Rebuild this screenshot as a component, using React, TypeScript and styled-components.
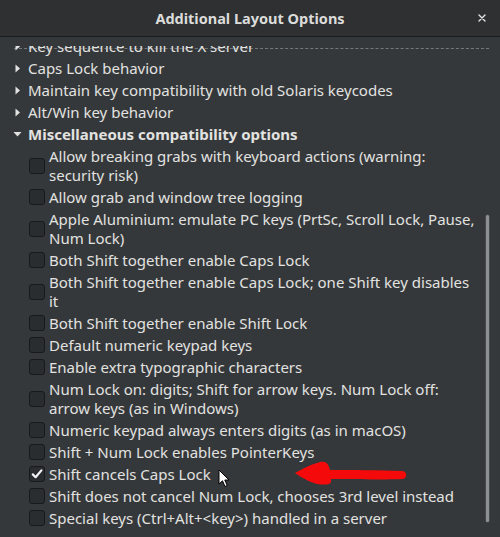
import React, { useLayoutEffect, useRef } from "react";
import styled, { createGlobalStyle } from "styled-components";

const Global = createGlobalStyle`
  html, body { margin: 0; padding: 0; background: #2b2d2f; }
  body { font-family: "Noto Sans", "DejaVu Sans", sans-serif; }
  * { box-sizing: border-box; }
`;

const Window = styled.div`
  position: relative;
  width: 500px;
  height: 537px;
  background: #35383a;
  color: #e2e2e0;
  display: flex;
  flex-direction: column;
  overflow: hidden;
`;

const TitleBar = styled.div`
  height: 37px;
  flex: none;
  background: #2e3032;
  border-bottom: 1px solid #1a1b1c;
  display: grid;
  grid-template-columns: 1fr auto 1fr;
  align-items: center;
`;

const Title = styled.div`
  grid-column: 2;
  font-weight: 700;
  font-size: 14.5px;
  color: #dcdcda;
`;

const CloseButton = styled.div`
  grid-column: 3;
  justify-self: end;
  margin-right: 14px;
  width: 8px;
  height: 8px;
  display: flex;
`;

const Body = styled.div`
  flex: 1;
  padding: 9px 0 8px;
  display: flex;
  min-height: 0;
`;

const Scroller = styled.div`
  position: relative;
  flex: 1;
  min-height: 0;
  display: flex;
`;

const Viewport = styled.div`
  flex: 1;
  overflow: hidden;
`;

const Undershoot = styled.div`
  position: absolute;
  left: 14px;
  right: 11px;
  top: 2px;
  border-top: 1px dashed rgba(200, 200, 200, 0.45);
  pointer-events: none;
`;

const Thumb = styled.div`
  position: absolute;
  right: 11px;
  top: 169px;
  bottom: 7px;
  width: 3px;
  border-radius: 2px;
  background: #8d8f90;
  box-shadow: 0 0 0 0.5px #5c5e60;
`;

const List = styled.div`
  display: flex;
  flex-direction: column;
`;

const Row = styled.div<{ $indent: number }>`
  display: flex;
  align-items: center;
  padding: 1.5px 0 1.5px ${(p) => p.$indent}px;
  font-size: 15px;
  line-height: 19px;
`;

const Expander = styled.span<{ $w?: number }>`
  width: ${(p) => p.$w ?? 13}px;
  flex: none;
  display: flex;
  align-items: center;
  justify-content: flex-start;
`;

const GroupLabel = styled.span<{ $bold?: boolean }>`
  font-weight: ${(p) => (p.$bold ? 700 : 400)};
  white-space: nowrap;
`;

const Box = styled.span`
  width: 16px;
  height: 16px;
  flex: none;
  margin-right: 4px;
  border-radius: 3px;
  border: 1px solid #17191a;
  background: #2a2d2f;
  display: flex;
  align-items: center;
  justify-content: center;
`;

const Label = styled.span`
  display: flex;
  flex-direction: column;
  white-space: nowrap;
`;

const Overlay = styled.svg`
  position: absolute;
  pointer-events: none;
`;

const groupsAbove = [
  "Key sequence to kill the X server",
  "Caps Lock behavior",
  "Maintain key compatibility with old Solaris keycodes",
  "Alt/Win key behavior",
];

const options: { lines: string[]; checked?: boolean }[] = [
  { lines: ["Allow breaking grabs with keyboard actions (warning:", "security risk)"] },
  { lines: ["Allow grab and window tree logging"] },
  { lines: ["Apple Aluminium: emulate PC keys (PrtSc, Scroll Lock, Pause,", "Num Lock)"] },
  { lines: ["Both Shift together enable Caps Lock"] },
  { lines: ["Both Shift together enable Caps Lock; one Shift key disables", "it"] },
  { lines: ["Both Shift together enable Shift Lock"] },
  { lines: ["Default numeric keypad keys"] },
  { lines: ["Enable extra typographic characters"] },
  { lines: ["Num Lock on: digits; Shift for arrow keys. Num Lock off:", "arrow keys (as in Windows)"] },
  { lines: ["Numeric keypad always enters digits (as in macOS)"] },
  { lines: ["Shift + Num Lock enables PointerKeys"] },
  { lines: ["Shift cancels Caps Lock"], checked: true },
  { lines: ["Shift does not cancel Num Lock, chooses 3rd level instead"] },
  { lines: ["Special keys (Ctrl+Alt+<key>) handled in a server"] },
];

const RightArrow = () => (
  <svg width="6" height="9" viewBox="0 0 6 9">
    <path d="M0.5 0.5 L5 4.5 L0.5 8.5 Z" fill="#e2e2e0" />
  </svg>
);

const DownArrow = () => (
  <svg width="9" height="6" viewBox="0 0 9 6">
    <path d="M0.5 1 L8.5 1 L4.5 5.5 Z" fill="#e2e2e0" />
  </svg>
);

const Check = () => (
  <svg width="12" height="12" viewBox="0 0 12 12">
    <path d="M1.8 6.4 L4.6 9.2 L10.4 2.4" fill="none" stroke="#f4f4f4" strokeWidth="2.2" strokeLinecap="round" strokeLinejoin="round" />
  </svg>
);

export default function App() {
  const vp = useRef<HTMLDivElement>(null);
  useLayoutEffect(() => {
    const el = vp.current;
    if (el) el.scrollTop = el.scrollHeight - el.clientHeight;
  }, []);

  return (
    <Window>
      <Global />
      <TitleBar>
        <Title>Additional Layout Options</Title>
        <CloseButton>
          <svg width="8" height="8" viewBox="0 0 8 8">
            <path d="M1 1 L7 7 M7 1 L1 7" stroke="#e6e6e6" strokeWidth="1.4" strokeLinecap="round" />
          </svg>
        </CloseButton>
      </TitleBar>
      <Body>
        <Scroller>
          <Viewport ref={vp}>
            <List>
              {groupsAbove.map((g) => (
                <Row key={g} $indent={15}>
                  <Expander>
                    <RightArrow />
                  </Expander>
                  <GroupLabel>{g}</GroupLabel>
                </Row>
              ))}
              <Row $indent={13}>
                <Expander $w={15}>
                  <DownArrow />
                </Expander>
                <GroupLabel $bold>Miscellaneous compatibility options</GroupLabel>
              </Row>
              {options.map((o) => (
                <Row key={o.lines[0]} $indent={29}>
                  <Box>{o.checked && <Check />}</Box>
                  <Label>
                    {o.lines.map((l) => (
                      <span key={l}>{l}</span>
                    ))}
                  </Label>
                </Row>
              ))}
            </List>
          </Viewport>
          <Undershoot />
          <Thumb />
        </Scroller>
      </Body>
      <Overlay style={{ left: 290, top: 458 }} width="122" height="30" viewBox="0 0 122 30">
        <path
          d="M5 15 C12 11 22 6 30 4 C35 3 38 5 39 9 L40 12 C62 12 90 12 112 13 C117 13 118 20 113 21 C90 22 62 21 41 21 L41 24 C40 27 34 27 27 26 C19 24 11 19 5 15 Z"
          fill="#f40a0a"
        />
      </Overlay>
      <Overlay style={{ left: 218, top: 469 }} width="12" height="19" viewBox="0 0 12 19">
        <path d="M1 1 L1 15 L4.5 11.8 L7 17.5 L9.2 16.5 L6.8 11 L11 11 Z" fill="#ffffff" stroke="#000000" strokeWidth="1" strokeLinejoin="round" />
      </Overlay>
    </Window>
  );
}
